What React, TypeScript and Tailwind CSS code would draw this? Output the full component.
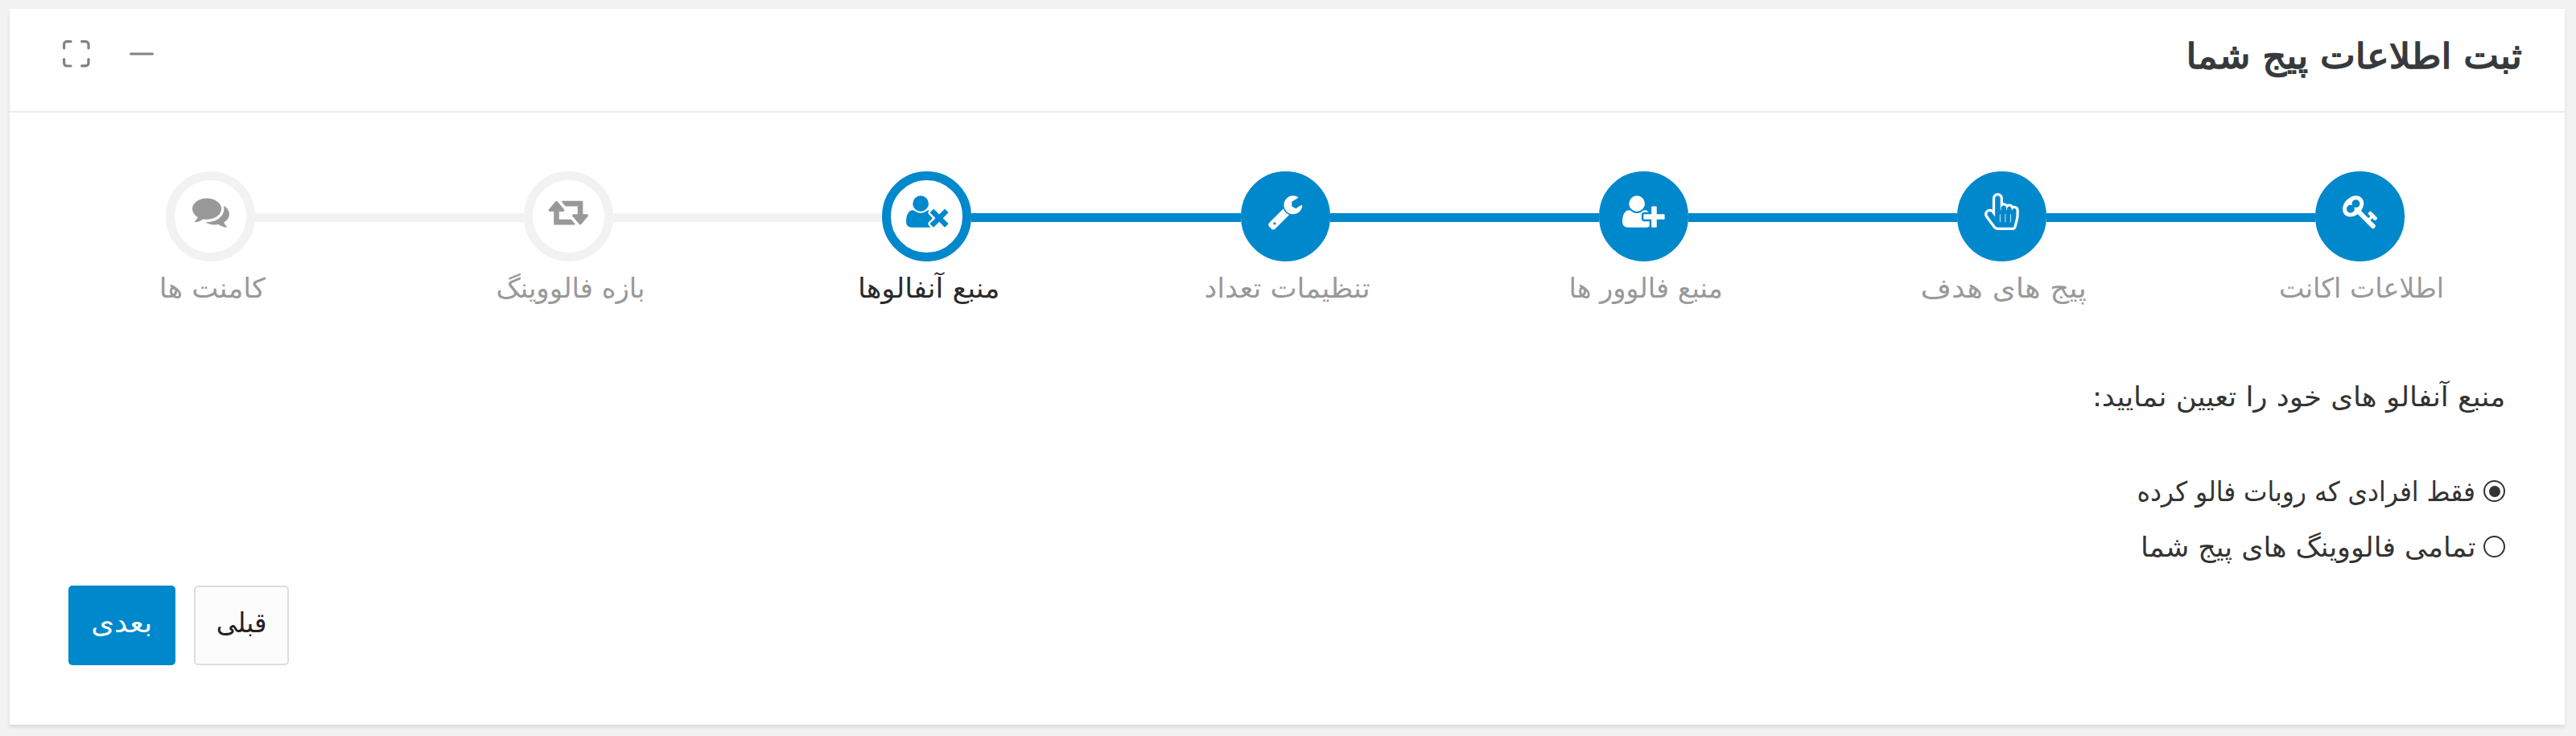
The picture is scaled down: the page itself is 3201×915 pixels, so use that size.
import React, { useState } from "react";
import clsx from "clsx";

const icons = {
  key: {
    width: 1664,
    path: "M832 512q0-80-56-136t-136-56-136 56-56 136q0 42 19 83-41-19-83-19-80 0-136 56t-56 136 56 136 136 56 136-56 56-136q0-42-19-83 41 19 83 19 80 0 136-56t56-136zm851 704q0 17-49 66t-66 49q-9 0-28.500-16t-36.500-33-38.500-40-24.500-26l-96 96 220 220q28 28 28 68 0 42-39 81t-81 39q-40 0-68-28l-671-671q-176 131-365 131-163 0-265.500-102.500t-102.500-265.500q0-160 95-313t248-248 313-95q163 0 265.500 102.500t102.500 265.500q0 189-131 365l355 355 96-96q-3-3-26-24.500t-40-38.500-33-36.500-16-28.500q0-17 49-66t66-49q13 0 23 10 6 6 46 44.500t82 79.500 86.500 86 73 78 28.500 41z",
  },
  pointer: {
    width: 1664,
    path: "M640 128q-53 0-90.500 37.500t-37.500 90.500v896l-151-202q-41-54-107-54-52 0-89 38t-37 90q0 43 26 77l384 512q38 51 102 51h718q22 0 39.500-13.500t22.500-34.500l92-368q24-96 24-194v-217q0-41-28-71t-68-30-68 28-28 68h-32v-61q0-48-32-81.500t-80-33.500q-46 0-79 33t-33 79v64h-32v-90q0-55-37-94.500t-91-39.500q-53 0-90.500 37.500t-37.500 90.500v96h-32v-570q0-55-37-94.500t-91-39.500zm0-128q107 0 181.500 77.500t74.500 185.500v220q22-2 32-2 99 0 173 69 47-21 99-21 113 0 184 87 27-7 56-7 94 0 159 67.500t65 161.500v217q0 116-28 225l-92 368q-16 64-68 104.500t-118 40.500h-718q-60 0-114.500-27.500t-90.500-74.500l-384-512q-51-68-51-154 0-105 74.500-180.500t179.500-75.500q71 0 130 35v-547q0-106 75-181t181-75zm128 1408v-384h-32v384h32zm256 0v-384h-32v384h32zm256 0v-384h-32v384h32z",
  },
  userPlus: {
    width: 2048,
    path: "M704 896q-159 0-271.500-112.500t-112.500-271.500 112.500-271.500 271.500-112.500 271.500 112.500 112.500 271.500-112.500 271.500-271.500 112.500zm960 128h352q13 0 22.500 9.500t9.500 22.500v192q0 13-9.500 22.500t-22.500 9.500h-352v352q0 13-9.500 22.500t-22.500 9.500h-192q-13 0-22.500-9.500t-9.500-22.500v-352h-352q-13 0-22.500-9.500t-9.500-22.500v-192q0-13 9.500-22.500t22.500-9.500h352v-352q0-13 9.500-22.500t22.500-9.500h192q13 0 22.500 9.500t9.500 22.500v352zm-736 224q0 52 38 90t90 38h256v238q-68 50-171 50h-874q-121 0-194-69t-73-190q0-53 3.500-103.500t14-109 26.500-108.500 43-97.500 62-81 85.500-53.500 111.500-20q19 0 39 17 79 61 154.500 91.500t164.500 30.500 164.500-30.500 154.500-91.500q20-17 39-17 132 0 217 96h-223q-52 0-90 38t-38 90v192z",
  },
  wrench: {
    width: 1792,
    path: "M448 1472q0-26-19-45t-45-19-45 19-19 45 19 45 45 19 45-19 19-45zm644-420l-682 682q-37 37-90 37-52 0-91-37l-106-108q-38-36-38-90 0-53 38-91l681-681q39 98 114.500 173.500t173.500 114.500zm634-435q0 39-23 106-47 134-164.500 217.500t-258.500 83.500q-185 0-316.500-131.500t-131.500-316.500 131.500-316.500 316.500-131.500q58 0 121.500 16.500t107.500 46.500q16 11 16 28t-16 28l-293 169v224l193 107q5-3 79-48.500t135.500-81 70.500-35.500q15 0 23.500 10t8.500 25z",
  },
  userTimes: {
    width: 2048,
    path: "M704 896q-159 0-271.500-112.500t-112.500-271.500 112.500-271.500 271.500-112.500 271.500 112.500 112.500 271.500-112.500 271.500-271.500 112.500zm1077 320l249 249q9 9 9 23 0 13-9 22l-136 136q-9 9-22 9-14 0-23-9l-249-249-249 249q-9 9-23 9-13 0-22-9l-136-136q-9-9-9-22 0-14 9-23l249-249-249-249q-9-9-9-23 0-13 9-22l136-136q9-9 22-9 14 0 23 9l249 249 249-249q9-9 23-9 13 0 22 9l136 136q9 9 9 22 0 14-9 23zm-498 0l-181 181q-37 37-37 91 0 53 37 90l83 83q-21 3-44 3h-874q-121 0-194-69t-73-190q0-53 3.500-103.500t14-109 26.500-108.500 43-97.500 62-81 85.500-53.500 111.500-20q19 0 39 17 154 122 319 122t319-122q20-17 39-17 28 0 57 6-28 27-41 50t-13 56q0 54 37 91z",
  },
  retweet: {
    width: 2048,
    path: "M1344 1504q0 13-9.500 22.500t-22.500 9.500h-960q-8 0-13.500-2t-9-7-5.500-8-3-11.500-1-11.500v-600h-192q-26 0-45-19t-19-45q0-24 15-41l320-384q19-22 49-22t49 22l320 384q15 17 15 41 0 26-19 45t-45 19h-192v384h576q16 0 25 11l160 192q7 10 7 21zm640-416q0 24-15 41l-320 384q-20 23-49 23t-49-23l-320-384q-15-17-15-41 0-26 19-45t45-19h192v-384h-576q-16 0-25-12l-160-192q-7-9-7-20 0-13 9.500-22.500t22.500-9.500h960q8 0 13.500 2t9 7 5.500 8 3 11.500 1 11.500v600h192q26 0 45 19t19 45z",
  },
  comments: {
    width: 1792,
    path: "M1408 768q0 139-94 257t-256.500 186.500-353.500 68.500q-86 0-176-16-124 88-278 128-36 9-86 16h-3q-11 0-20.500-8t-11.500-21q-1-3-1-6.500t.5-6.500 2-6l2.500-5 3.500-5.500 4-5 4.500-5 4-4.500q5-6 23-25t26-29.500 22.500-29 25-38.500 20.500-44q-124-72-195-177t-71-224q0-139 94-257t256.500-186.500 353.500-68.500 353.500 68.500 256.500 186.500 94 257zm384 256q0 120-71 224.500t-195 176.500q10 24 20.500 44t25 38.500 22.500 29 26 29.500 23 25q1 1 4 4.500t4.500 5 4 5 3.500 5.500l2.500 5 2 6 .5 6.500-1 6.500q-3 14-13 22t-22 7q-50-7-86-16-154-40-278-128-90 16-176 16-271 0-472-132 58 4 88 4 161 0 309-45t264-129q125-92 192-212t67-254q0-77-23-152 129 71 204 178t75 230z",
  },
};

type IconName = keyof typeof icons;

const steps: { label: string; icon: IconName; fit: string }[] = [
  { label: "اطلاعات اکانت", icon: "key", fit: "scale-x-[0.98]" },
  { label: "پیج های هدف", icon: "pointer", fit: "scale-x-[1.09]" },
  { label: "منبع فالوور ها", icon: "userPlus", fit: "scale-x-[0.985]" },
  { label: "تنظیمات تعداد", icon: "wrench", fit: "scale-x-[1.035]" },
  { label: "منبع آنفالوها", icon: "userTimes", fit: "scale-x-[1.035]" },
  { label: "بازه فالووینگ", icon: "retweet", fit: "scale-x-[0.995]" },
  { label: "کامنت ها", icon: "comments", fit: "scale-x-[1.035]" },
];

const options = [
  { label: "فقط افرادی که روبات فالو کرده", fit: "scale-x-[0.92]" },
  { label: "تمامی فالووینگ های پیج شما", fit: "scale-x-[1.027]" },
];

const StepIcon = ({ name }: { name: IconName }) => (
  <svg viewBox={`0 0 ${icons[name].width} 1792`} className="h-[46px] w-auto overflow-visible" fill="currentColor">
    <path d={icons[name].path} />
  </svg>
);

const App = () => {
  const [current, setCurrent] = useState<number>(4);
  const [source, setSource] = useState<number>(0);

  const line = (on: boolean, hidden: boolean) =>
    clsx("mt-[3px] h-[11px] flex-1", hidden ? "bg-transparent" : on ? "bg-[#0088cc]" : "bg-[#f2f2f2]");

  return (
    <div
      dir="rtl"
      className="h-[915px] w-[3201px] overflow-hidden bg-[#f2f2f2] pt-[11px] pr-[14px] pl-[12px] font-['DejaVu_Sans',sans-serif] text-[34px] text-[#333333]"
    >
      <div className="h-[890px] bg-white shadow-[0_3px_4px_rgba(0,0,0,0.1)]">
        <div className="flex h-[129px] items-start justify-between border-b-2 border-[#ececec] pr-[53px] pl-[66px]">
          <h4 className="mt-[29px] origin-right scale-x-[1.057] text-[44px] leading-[60px] whitespace-nowrap text-[#373a3c] [-webkit-text-stroke:1.5px_#373a3c]">
            ثبت اطلاعات پیج شما
          </h4>
          <div className="mt-[39px] flex items-center gap-[49px] text-[#7b848c]">
            <svg width="30" height="34" viewBox="0 0 30 34" stroke="currentColor" strokeWidth="3.2" strokeLinecap="round">
              <path d="M1.600 17H28.400" />
            </svg>
            <svg
              width="34"
              height="34"
              viewBox="0 0 34 34"
              fill="none"
              stroke="currentColor"
              strokeWidth="3.2"
              strokeLinecap="round"
              strokeLinejoin="round"
            >
              <path d="M1.600 10V5a3.400 3.400 0 0 1 3.400-3.400h5M23.500 1.600h5A3.400 3.400 0 0 1 32 5v5M32 23.500v5a3.400 3.400 0 0 1-3.400 3.400h-5M10 32H5a3.400 3.400 0 0 1-3.400-3.400v-5" />
            </svg>
          </div>
        </div>

        <ul className="mt-[73px] mr-[32px] ml-[27px] grid grid-cols-7">
          {steps.map((step, i) => (
            <li key={step.icon} className="flex flex-col items-center" onClick={() => setCurrent(i)}>
              <div className="flex w-full items-center">
                <div className={line(i <= current, i === 0)} />
                <div
                  className={clsx(
                    "flex h-[112px] w-[111px] justify-center rounded-full border-[11px] pt-[15.5px]",
                    i < current && "border-[#0088cc] bg-[#0088cc] text-white",
                    i === current && "border-[#0088cc] bg-white text-[#0088cc]",
                    i > current && "border-[#f2f2f2] bg-white text-[#999999]"
                  )}
                >
                  <StepIcon name={step.icon} />
                </div>
                <div className={line(i < current, i === steps.length - 1)} />
              </div>
              <span
                className={clsx(
                  "mt-[5px] mb-px ml-[5px] leading-[56px] whitespace-nowrap",
                  i === current ? "text-[#2b2b2b]" : "text-[#999999]",
                  step.fit
                )}
              >
                {step.label}
              </span>
            </li>
          ))}
        </ul>

        <div className="mt-[78px] mr-[74px] flex flex-col items-start">
          <p className="origin-right scale-x-[1.045] leading-[56px] whitespace-nowrap">
            منبع آنفالو های خود را تعیین نمایید:
          </p>
          <div className="mt-[62px] flex flex-col items-start">
            {options.map((option, i) => (
              <label key={option.label} className="flex h-[69px] items-start gap-[10px]" onClick={() => setSource(i)}>
                <span className="mt-[14px] flex size-[27px] items-center justify-center rounded-full border-2 border-[#333333]">
                  {source === i && <span className="size-[14px] rounded-full bg-[#333333]" />}
                </span>
                <span className={clsx("origin-right leading-[56px] whitespace-nowrap", option.fit)}>
                  {option.label}
                </span>
              </label>
            ))}
          </div>
        </div>

        <div className="mt-[7px] ml-[73px] flex justify-end gap-[23px]">
          <button className="h-[99px] w-[118px] rounded-[5px] border-2 border-[#dddddd] bg-[#fcfcfc] pb-[7px] text-[#222222]">
            <span className="inline-block scale-x-[0.95]">قبلی</span>
          </button>
          <button className="h-[99px] w-[133px] rounded-[5px] bg-[#0088cc] pb-[7px] text-white">
            <span className="inline-block scale-x-[1.08]">بعدی</span>
          </button>
        </div>
      </div>
    </div>
  );
};

export default App;
